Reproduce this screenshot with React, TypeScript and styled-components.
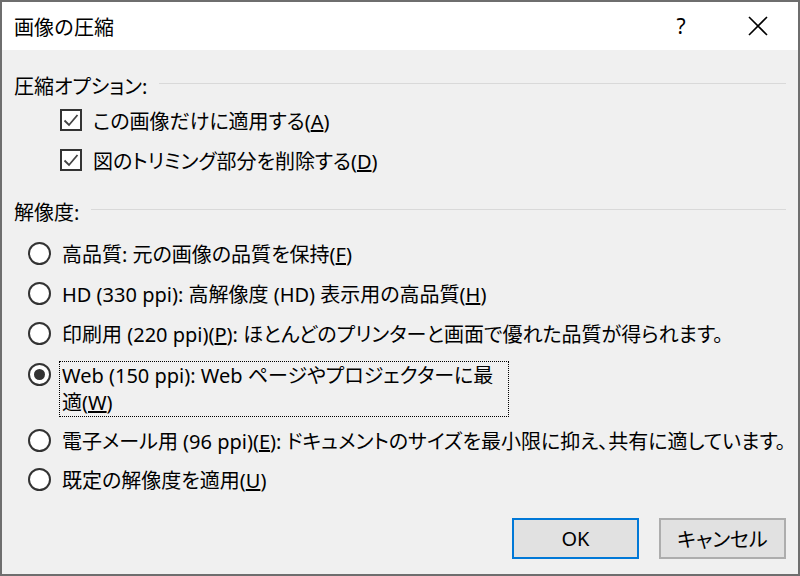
import React from "react";
import styled, { createGlobalStyle } from "styled-components";

const Global = createGlobalStyle`
  html, body { margin: 0; padding: 0; background: #6b6b6b; }
  * { box-sizing: border-box; }
  body {
    font-family: "Noto Sans", "Noto Sans CJK JP", sans-serif;
    font-feature-settings: "palt";
    color: #000;
  }
`;

const Window = styled.div`
  width: 800px;
  height: 576px;
  border: 2px solid #6e6e6e;
  display: flex;
  flex-direction: column;
  background: #f0f0f0;
  overflow: hidden;
`;

const TitleBar = styled.div`
  height: 48px;
  background: #fff;
  display: flex;
  align-items: center;
  padding-left: 12px;
  flex-shrink: 0;
`;

const Title = styled.div`
  font-family: "Noto Sans CJK JP", sans-serif;
  font-feature-settings: normal;
  font-size: 20px;
  flex: 1;
  margin-top: 1px;
`;

const TitleButton = styled.div<{ $ml?: number; $mr?: number }>`
  width: 40px;
  height: 48px;
  margin-left: ${(p) => p.$ml ?? 0}px;
  margin-right: ${(p) => p.$mr ?? 0}px;
  display: flex;
  align-items: center;
  justify-content: center;
  font-size: 21px;
  font-family: "Noto Sans", sans-serif;
`;

const Body = styled.div`
  flex: 1;
  display: flex;
  flex-direction: column;
  padding: 20px 12px 0 12px;
  font-size: 20px;
`;

const GroupHeader = styled.div<{ $mt: number }>`
  height: 30px;
  margin-top: ${(p) => p.$mt}px;
  display: flex;
  align-items: center;
  gap: 12px;
  &::after {
    content: "";
    flex: 1;
    height: 1px;
    background: #d9d9d9;
    margin-top: -3px;
  }
`;

const CheckRow = styled.label`
  height: 40px;
  display: flex;
  align-items: center;
  padding-left: 46px;
  gap: 11px;
`;

const CheckBox = styled.span`
  width: 22px;
  height: 22px;
  border: 2px solid #333;
  background: #fff;
  display: flex;
  align-items: center;
  justify-content: center;
  flex-shrink: 0;
`;

const RadioRow = styled.label<{ $h: number; $mt?: number }>`
  min-height: ${(p) => p.$h}px;
  margin-top: ${(p) => p.$mt ?? 0}px;
  display: flex;
  align-items: center;
  padding-left: 14px;
  gap: 11px;
  white-space: nowrap;
`;

const RadioCircle = styled.span<{ $on?: boolean; $top?: number }>`
  width: 23px;
  height: 23px;
  border-radius: 50%;
  border: 2px solid #333;
  background: #fff;
  flex-shrink: 0;
  align-self: ${(p) => (p.$top !== undefined ? "flex-start" : "center")};
  margin-top: ${(p) => p.$top ?? 0}px;
  display: flex;
  align-items: center;
  justify-content: center;
  &::after {
    content: "";
    display: ${(p) => (p.$on ? "block" : "none")};
    width: 11px;
    height: 11px;
    border-radius: 50%;
    background: #333;
  }
`;

const FocusLabel = styled.span`
  border: 1px dotted #000;
  width: 450px;
  margin-left: -3px;
  padding: 0 2px;
  line-height: 27px;
  white-space: normal;
`;

const ButtonBar = styled.div`
  display: flex;
  justify-content: flex-end;
  gap: 20px;
  padding: 0 12px 15px 0;
`;

const Button = styled.button<{ $default?: boolean }>`
  width: 127px;
  height: 41px;
  background: #e1e1e1;
  border: 2px solid ${(p) => (p.$default ? "#0078d7" : "#adadad")};
  font-family: "Noto Sans", "Noto Sans CJK JP", sans-serif;
  font-feature-settings: "palt";
  font-size: 20px;
  color: #000;
  padding: 0;
`;

const Check = () => (
  <CheckBox>
    <svg width="16" height="14" viewBox="0 0 16 14">
      <path d="M1.5 7.5 L6 12 L14.5 2" fill="none" stroke="#444" strokeWidth="1.8" />
    </svg>
  </CheckBox>
);

export default function App() {
  return (
    <>
      <Global />
      <Window>
        <TitleBar>
          <Title>画像の圧縮</Title>
          <TitleButton>?</TitleButton>
          <TitleButton $ml={37} $mr={20}>
            <svg width="20" height="20" viewBox="0 0 20 20">
              <path d="M1 1 L19 19 M19 1 L1 19" stroke="#000" strokeWidth="1.6" />
            </svg>
          </TitleButton>
        </TitleBar>
        <Body>
          <GroupHeader $mt={0}>圧縮オプション:</GroupHeader>
          <CheckRow>
            <Check />
            <span>この画像だけに適用する(<u>A</u>)</span>
          </CheckRow>
          <CheckRow>
            <Check />
            <span>図のトリミング部分を削除する(<u>D</u>)</span>
          </CheckRow>
          <GroupHeader $mt={16}>解像度:</GroupHeader>
          <RadioRow $h={40} $mt={7}>
            <RadioCircle />
            <span>高品質: 元の画像の品質を保持(<u>F</u>)</span>
          </RadioRow>
          <RadioRow $h={40}>
            <RadioCircle />
            <span>HD (330 ppi): 高解像度 (HD) 表示用の高品質(<u>H</u>)</span>
          </RadioRow>
          <RadioRow $h={41}>
            <RadioCircle />
            <span>印刷用 (220 ppi)(<u>P</u>): ほとんどのプリンターと画面で優れた品質が得られます。</span>
          </RadioRow>
          <RadioRow $h={62} $mt={4}>
            <RadioCircle $on $top={5} />
            <FocusLabel>
              Web (150 ppi): Web ページやプロジェクターに最
              <br />
              適(<u>W</u>)
            </FocusLabel>
          </RadioRow>
          <RadioRow $h={40}>
            <RadioCircle />
            <span>電子メール用 (96 ppi)(<u>E</u>): ドキュメントのサイズを最小限に抑え、共有に適しています。</span>
          </RadioRow>
          <RadioRow $h={38}>
            <RadioCircle />
            <span>既定の解像度を適用(<u>U</u>)</span>
          </RadioRow>
          <div style={{ flex: 1 }} />
        </Body>
        <ButtonBar>
          <Button $default>OK</Button>
          <Button>キャンセル</Button>
        </ButtonBar>
      </Window>
    </>
  );
}
